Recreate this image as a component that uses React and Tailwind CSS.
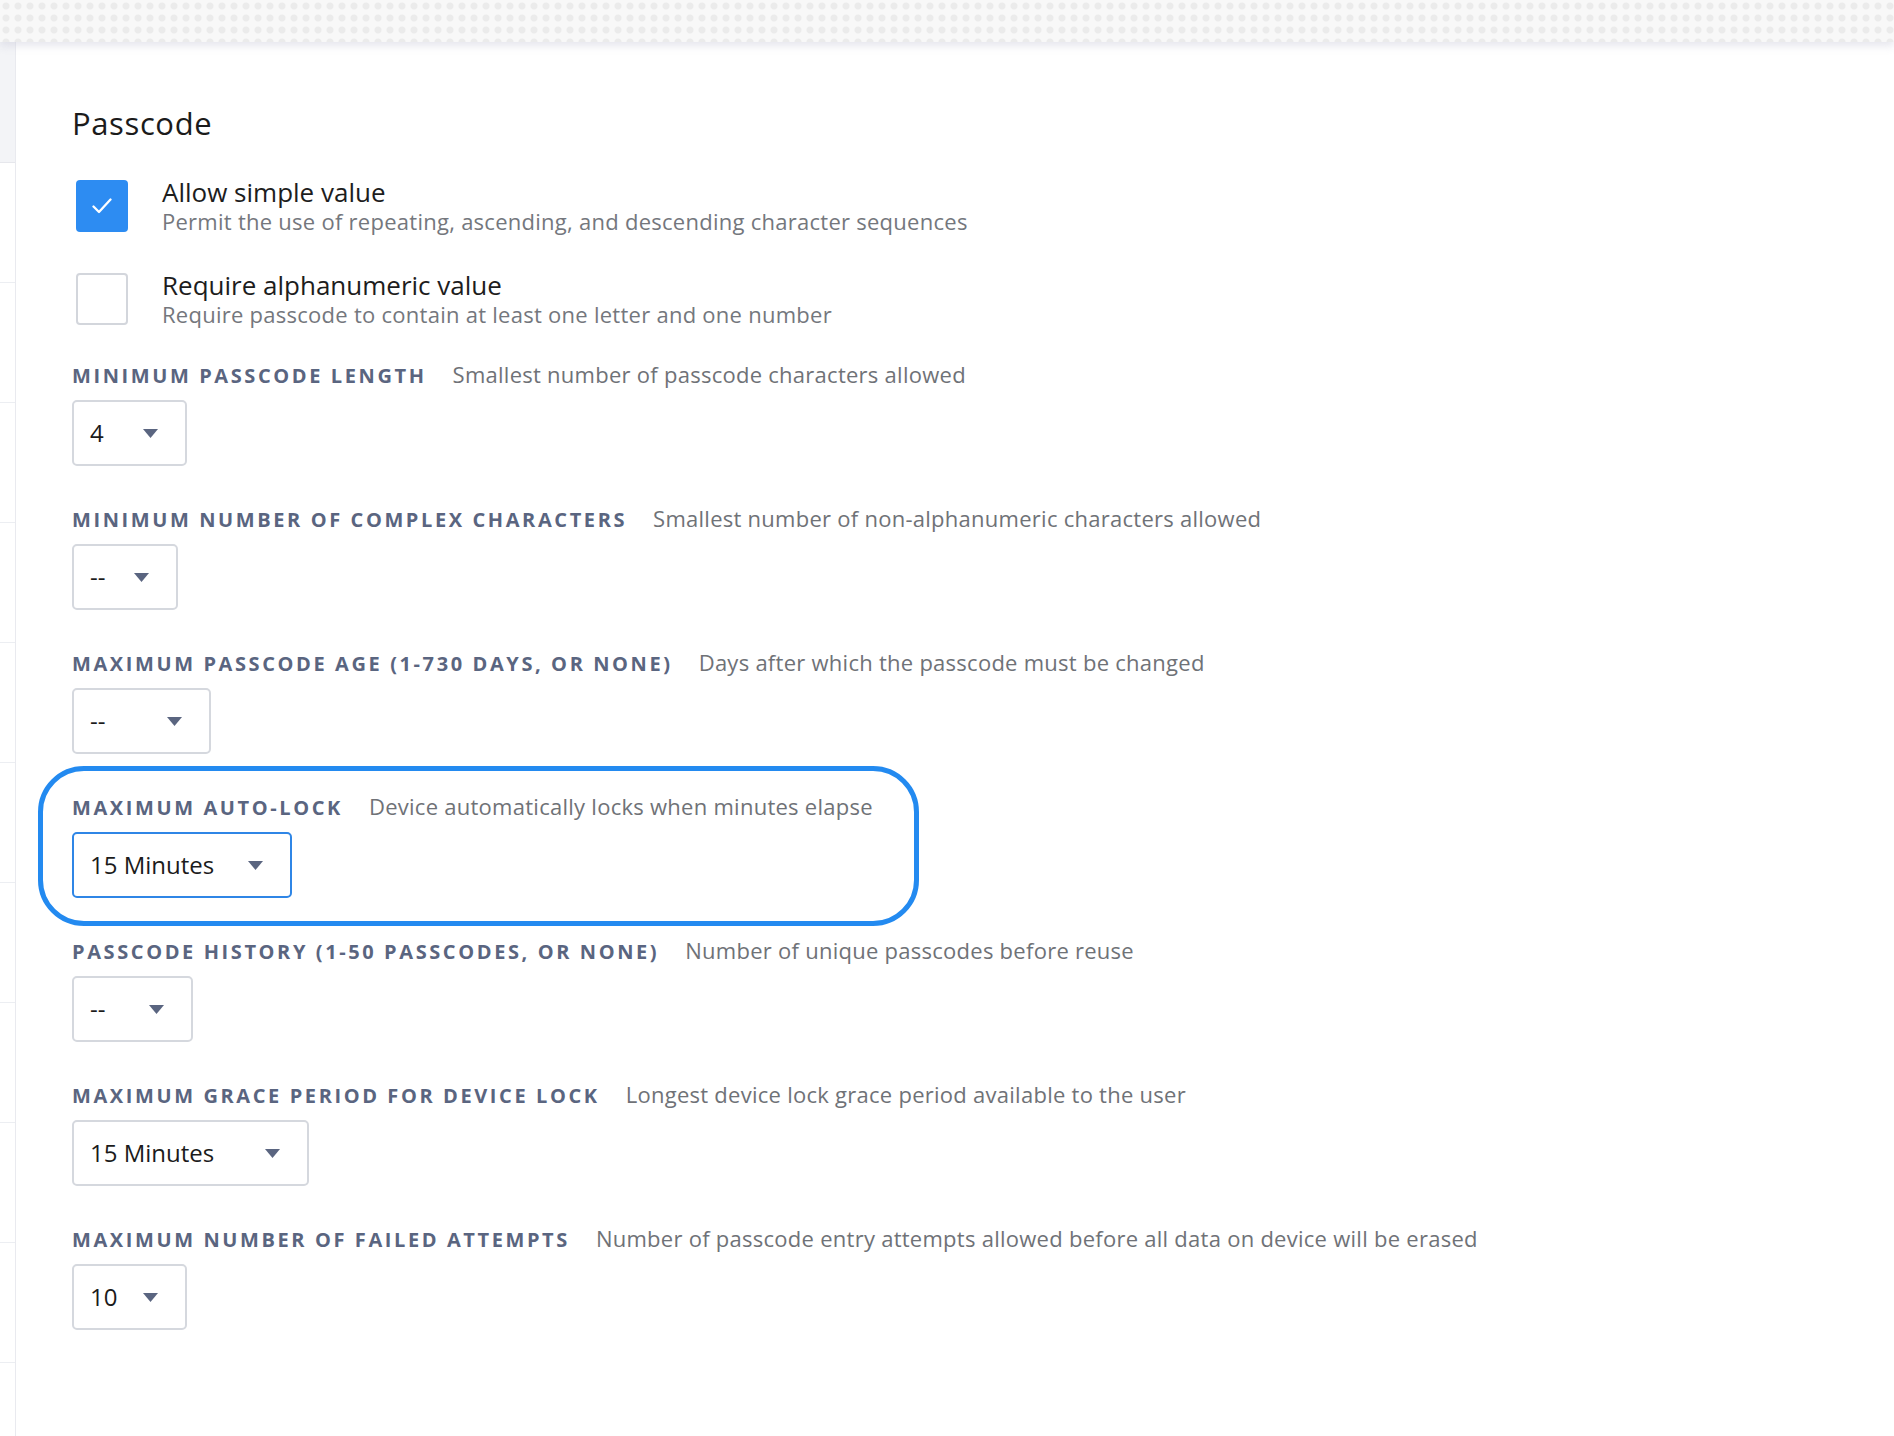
import React from 'react';

const fields = [
  { label: 'Minimum passcode length', hint: 'Smallest number of passcode characters allowed', value: '4', width: 'w-[115px]' },
  { label: 'Minimum number of complex characters', hint: 'Smallest number of non-alphanumeric characters allowed', value: '--', width: 'w-[106px]' },
  { label: 'Maximum passcode age (1-730 days, or none)', hint: 'Days after which the passcode must be changed', value: '--', width: 'w-[139px]' },
  { label: 'Maximum Auto-Lock', hint: 'Device automatically locks when minutes elapse', value: '15 Minutes', width: 'w-[220px]', focus: true },
  { label: 'Passcode history (1-50 passcodes, or none)', hint: 'Number of unique passcodes before reuse', value: '--', width: 'w-[121px]' },
  { label: 'Maximum grace period for device lock', hint: 'Longest device lock grace period available to the user', value: '15 Minutes', width: 'w-[237px]' },
  { label: 'Maximum number of failed attempts', hint: 'Number of passcode entry attempts allowed before all data on device will be erased', value: '10', width: 'w-[115px]' },
];

const Caret = () => (
  <svg width="15" height="9" viewBox="0 0 15 9" className="shrink-0">
    <path d="M0 0 H15 L7.5 9 Z" fill="#5a6580" />
  </svg>
);

const Select = ({ value, width, focus }) => (
  <div
    className={`${width} h-[66px] flex items-center justify-between pl-4 pr-[27px] rounded-[5px] bg-white border-2 ${
      focus ? 'border-[#2f86e6]' : 'border-[#d5d8de]'
    }`}
  >
    <span className="text-[24px] text-[#1b1b1b] leading-none">{value}</span>
    <Caret />
  </div>
);

const CheckRow = ({ checked, title, desc }) => (
  <div className="flex items-start">
    <div
      className={`ml-1 mt-[3px] w-[52px] h-[52px] rounded-[4px] flex items-center justify-center shrink-0 ${
        checked ? 'bg-[#2d8cf2]' : 'border-2 border-[#d3d6dc] bg-white'
      }`}
    >
      {checked && (
        <svg width="20" height="16" viewBox="0 0 20 16">
          <polyline points="1.5,8.5 7,14 18.5,1.5" fill="none" stroke="white" strokeWidth="2.3" strokeLinecap="round" strokeLinejoin="round" />
        </svg>
      )}
    </div>
    <div className="ml-[34px] flex flex-col gap-0">
      <div className="text-[26px] leading-[30px] text-[#1d1d1d]">{title}</div>
      <div className="text-[22px] leading-[28px] tracking-[0.012em] text-[#74777d]">{desc}</div>
    </div>
  </div>
);

const Field = ({ label, hint, value, width, focus }) => (
  <div className="relative">
    {focus && (
      <div className="absolute -left-[34px] -top-[28px] w-[881px] h-[160px] border-[5px] border-[#238af0] rounded-[46px] pointer-events-none" />
    )}
    <div className="flex items-baseline h-[24px]">
      <span className="text-[20px] leading-[24px] font-bold uppercase tracking-[0.13em] text-[#5a6580]">{label}</span>
      <span className="ml-[26px] text-[22px] leading-[24px] tracking-[0.012em] text-[#6f7277]">{hint}</span>
    </div>
    <div className="mt-[14px]">
      <Select value={value} width={width} focus={focus} />
    </div>
  </div>
);

export default function App() {
  return (
    <div className="min-h-[1436px] bg-white font-['Open_Sans','Lato',sans-serif]">
      <div className="relative z-10 h-[42px] bg-[#f8f8f8] bg-[radial-gradient(circle,#ebebeb_0_3px,transparent_4px)] bg-[length:12px_12px] shadow-[0_4px_8px_rgba(200,200,215,0.45)]" />
      <div className="flex">
        <div className="w-[16px] shrink-0 border-r border-[#e9eaef]">
          <div className="h-[121px] bg-[#f3f4f7] border-b border-[#e6e7ec]" />
          {Array.from({ length: 10 }).map((_, i) => (
            <div key={i} className="h-[120px] border-b border-[#eceef2]" />
          ))}
          <div className="h-[100px]" />
        </div>
        <div className="flex-1 pl-[56px]">
          <h1 className="mt-[63px] text-[31px] leading-[36px] tracking-[0.02em] text-[#1b1b1b] font-normal">Passcode</h1>
          <div className="mt-[36px] flex flex-col gap-[35px]">
            <CheckRow checked title="Allow simple value" desc="Permit the use of repeating, ascending, and descending character sequences" />
            <CheckRow title="Require alphanumeric value" desc="Require passcode to contain at least one letter and one number" />
          </div>
          <div className="mt-[34px] flex flex-col gap-[40px]">
            {fields.map((f) => (
              <Field key={f.label} {...f} />
            ))}
          </div>
        </div>
      </div>
    </div>
  );
}
